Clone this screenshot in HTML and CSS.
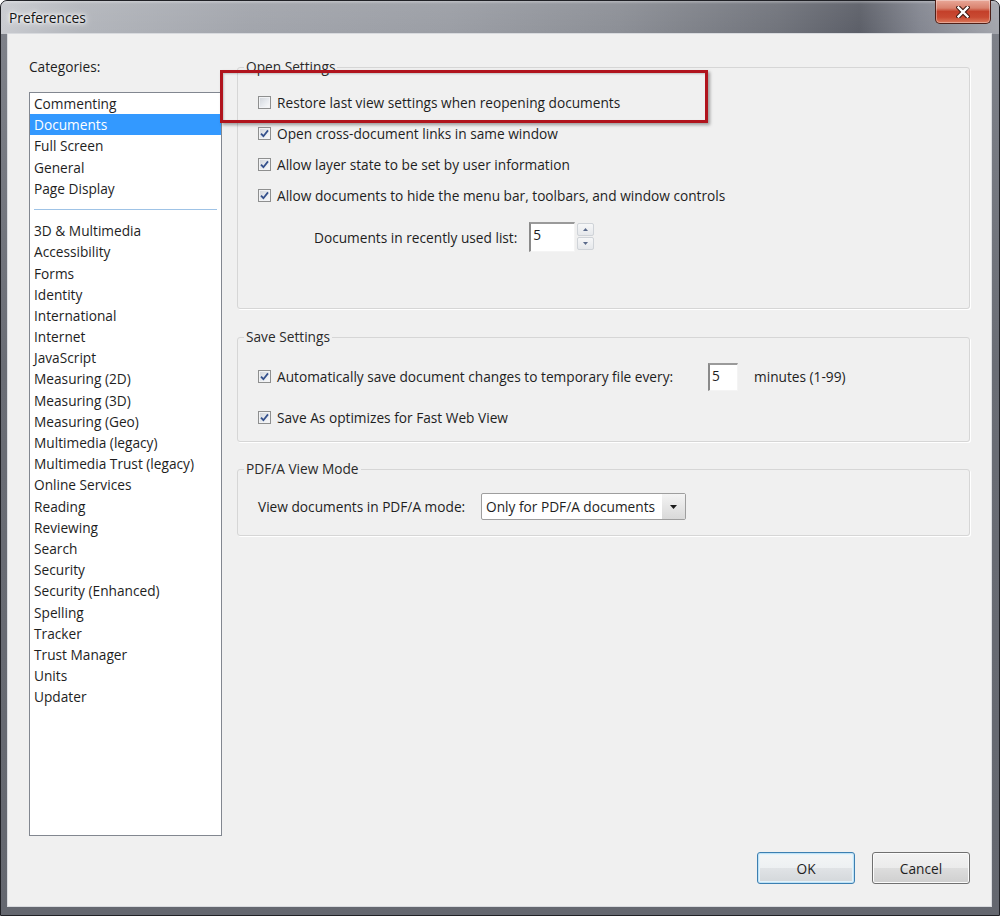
FILE: index.html
```html
<!DOCTYPE html>
<html lang="en">
<head>
<meta charset="utf-8">
<title>Preferences</title>
<link rel="stylesheet" href="styles.css">
</head>
<body>
<div class="window">
  <div class="titlebar">
    <span class="title">Preferences</span>
    <button class="close" aria-label="Close">
      <svg width="14" height="12" viewBox="0 0 14 12"><path d="M2.5 1.5 L11.5 10.5 M11.5 1.5 L2.5 10.5" stroke="#3b1710" stroke-width="4.4" stroke-linecap="square" fill="none"/><path d="M2.5 1.5 L11.5 10.5 M11.5 1.5 L2.5 10.5" stroke="#ffffff" stroke-width="2.4" stroke-linecap="square" fill="none"/></svg>
    </button>
  </div>
  <div class="client">
    <div class="main">
      <div class="categories">
        <div class="cat-label">Categories:</div>
        <ul class="list">
          <li>Commenting</li>
          <li class="selected">Documents</li>
          <li>Full Screen</li>
          <li>General</li>
          <li>Page Display</li>
          <li class="sep"></li>
          <li>3D &amp; Multimedia</li>
          <li>Accessibility</li>
          <li>Forms</li>
          <li>Identity</li>
          <li>International</li>
          <li>Internet</li>
          <li>JavaScript</li>
          <li>Measuring (2D)</li>
          <li>Measuring (3D)</li>
          <li>Measuring (Geo)</li>
          <li>Multimedia (legacy)</li>
          <li>Multimedia Trust (legacy)</li>
          <li>Online Services</li>
          <li>Reading</li>
          <li>Reviewing</li>
          <li>Search</li>
          <li>Security</li>
          <li>Security (Enhanced)</li>
          <li>Spelling</li>
          <li>Tracker</li>
          <li>Trust Manager</li>
          <li>Units</li>
          <li>Updater</li>
        </ul>
      </div>
      <div class="settings">
        <fieldset class="group group-open">
          <legend>Open Settings</legend>
          <div class="row"><span class="cb"></span><span>Restore last view settings when reopening documents</span></div>
          <div class="row"><span class="cb checked"><svg width="11" height="11" viewBox="0 0 11 11"><path d="M2 5.6 L4.4 8.2 L9 2.4" stroke="#34508c" stroke-width="1.8" fill="none"/></svg></span><span>Open cross-document links in same window</span></div>
          <div class="row"><span class="cb checked"><svg width="11" height="11" viewBox="0 0 11 11"><path d="M2 5.6 L4.4 8.2 L9 2.4" stroke="#34508c" stroke-width="1.8" fill="none"/></svg></span><span>Allow layer state to be set by user information</span></div>
          <div class="row"><span class="cb checked"><svg width="11" height="11" viewBox="0 0 11 11"><path d="M2 5.6 L4.4 8.2 L9 2.4" stroke="#34508c" stroke-width="1.8" fill="none"/></svg></span><span>Allow documents to hide the menu bar, toolbars, and window controls</span></div>
          <div class="spin-row">
            <span>Documents in recently used list:</span>
            <span class="num num-recent">5</span>
            <span class="spin">
              <span class="spin-btn"><svg width="5" height="3" viewBox="0 0 5 3"><path d="M0 3 L2.5 0 L5 3z" fill="#5a6a8a"/></svg></span>
              <span class="spin-btn"><svg width="5" height="3" viewBox="0 0 5 3"><path d="M0 0 L5 0 L2.5 3z" fill="#5a6a8a"/></svg></span>
            </span>
          </div>
        </fieldset>
        <fieldset class="group group-save">
          <legend>Save Settings</legend>
          <div class="row">
            <span class="autosave"><span class="cb checked"><svg width="11" height="11" viewBox="0 0 11 11"><path d="M2 5.6 L4.4 8.2 L9 2.4" stroke="#34508c" stroke-width="1.8" fill="none"/></svg></span><span>Automatically save document changes to temporary file every:</span></span>
            <span class="num num-min">5</span>
            <span class="unit">minutes (1-99)</span>
          </div>
          <div class="row row-gap"><span class="cb checked"><svg width="11" height="11" viewBox="0 0 11 11"><path d="M2 5.6 L4.4 8.2 L9 2.4" stroke="#34508c" stroke-width="1.8" fill="none"/></svg></span><span>Save As optimizes for Fast Web View</span></div>
        </fieldset>
        <fieldset class="group group-pdfa">
          <legend>PDF/A View Mode</legend>
          <div class="row">
            <span class="pdfa-label">View documents in PDF/A mode:</span>
            <span class="select"><span class="select-text">Only for PDF/A documents</span><span class="select-arrow"><svg width="7" height="4" viewBox="0 0 7 4"><path d="M0 0 H7 L3.5 4z" fill="#1a1a1a"/></svg></span></span>
          </div>
        </fieldset>
      </div>
    </div>
    <div class="buttons">
      <button class="btn btn-ok">OK</button>
      <button class="btn">Cancel</button>
    </div>
    <div class="annotation"></div>
  </div>
</div>
</body>
</html>
```

FILE: styles.css
```css
* { box-sizing: border-box; }
html, body { margin: 0; padding: 0; }
body {
  background: #ffffff;
  font-family: "Open Sans", "Segoe UI", sans-serif;
  font-size: 13.7px;
  color: #1e1e1e;
}

.window {
  width: 1000px;
  height: 916px;
  display: flex;
  flex-direction: column;
  border: 1px solid #202126;
  border-radius: 7px 7px 0 0;
  background: linear-gradient(180deg, #80838b 0%, #6a6d75 40%, #64676f 100%);
}

.titlebar {
  height: 33px;
  flex: 0 0 33px;
  display: flex;
  align-items: flex-start;
  padding-left: 8px;
  border-radius: 6px 6px 0 0;
  background:
    linear-gradient(180deg, rgba(255,255,255,0.35) 0, rgba(255,255,255,0.05) 3px, rgba(255,255,255,0) 100%),
    linear-gradient(90deg, #c9cbd0 0%, #b3b6bc 8%, #a2a5ac 25%, #9b9ea5 45%, #8c8f96 62%, #70737b 78%, #5c5f68 86%, #838690 92%, #a4a6ad 100%);
}

.title {
  margin-top: 7px;
  font-size: 13.8px;
  color: #151515;
  text-shadow: 0 0 8px #ffffff, 0 0 5px #ffffff, 0 0 3px #ffffff;
}

.close {
  margin-left: auto;
  margin-right: 8px;
  margin-top: -1px;
  width: 56px;
  height: 24px;
  padding: 0;
  display: flex;
  align-items: center;
  justify-content: center;
  border: 1px solid #4e2018;
  border-top: none;
  border-radius: 0 0 5px 5px;
  background: linear-gradient(180deg, #e9a899 0%, #d9826e 35%, #c4402a 50%, #c94a32 75%, #dc7a5c 100%);
  box-shadow: inset 0 0 0 1px rgba(255,255,255,0.35);
}

.client {
  position: relative;
  flex: 1;
  margin: 0 8px 9px 7px;
  background: #f0f0f0;
  box-shadow: 0 0 0 1px #d8dade;
  display: flex;
  flex-direction: column;
  padding: 23px 21px 22px 21px;
}

.main {
  flex: 1;
  display: grid;
  grid-template-columns: 193px 1fr;
  column-gap: 15px;
  min-height: 0;
}

.categories {
  display: flex;
  flex-direction: column;
}

.cat-label {
  line-height: 20px;
  height: 20px;
  color: #1e1e1e;
}

.list {
  flex: 1;
  margin: 15px 0 0 0;
  padding: 0;
  list-style: none;
  background: #ffffff;
  border: 1px solid #828790;
}

.list li {
  height: 21.2px;
  line-height: 21.2px;
  padding-left: 4px;
  white-space: nowrap;
  color: #1e1e1e;
}

.list li.selected {
  background: #3399ff;
  color: #ffffff;
}

.list li.sep {
  display: flex;
  align-items: center;
  padding: 0 4px;
}

.list li.sep::after {
  content: "";
  flex: 1;
  height: 1px;
  background: #9fc3e6;
}

.settings {
  display: flex;
  flex-direction: column;
}

.group {
  margin: 0;
  padding: 0 20px;
  border: 1px solid #d6d6d6;
  border-radius: 3px;
  box-shadow: 1px 1px 0 #ffffff;
  min-inline-size: 0;
}

.group legend {
  margin-left: -14px;
  padding: 0 2px;
  line-height: 20px;
  color: #2a2a2a;
}

.group-open { padding-top: 10px; padding-bottom: 56px; }
.group-save { margin-top: 18px; padding-top: 14px; padding-bottom: 8px; }
.group-pdfa { margin-top: 17px; padding-top: 12px; padding-bottom: 13px; }

.row {
  height: 31px;
  display: flex;
  align-items: center;
  gap: 6px;
  white-space: nowrap;
}

.row-gap { margin-top: 10px; }

.cb {
  width: 13px;
  height: 13px;
  flex: 0 0 13px;
  display: flex;
  align-items: center;
  justify-content: center;
  border: 1px solid #8e8f8f;
  background: linear-gradient(135deg, #cfd3d9 0%, #e8ebef 55%, #fbfbfb 100%);
  box-shadow: inset 0 0 0 1px #f2f3f5;
}

.spin-row {
  margin-top: 11px;
  height: 30px;
  display: flex;
  align-items: center;
  padding-left: 56px;
  white-space: nowrap;
}

.num {
  display: block;
  height: 30px;
  background: #ffffff;
  border-style: solid;
  border-width: 2px 1px 1px 2px;
  border-color: #9a9a9a #f4f4f4 #f4f4f4 #8a8a8a;
  padding: 2px 0 0 2px;
  line-height: 18px;
  color: #1e1e1e;
}

.num-recent { width: 46px; margin-left: 12px; }
.num-min { width: 30px; height: 28px; }

.spin {
  margin-left: 2px;
  display: flex;
  flex-direction: column;
  gap: 1px;
  height: 30px;
  padding-top: 1px;
}

.spin-btn {
  width: 17px;
  height: 13px;
  display: flex;
  align-items: center;
  justify-content: center;
  border: 1px solid #cfd3d8;
  border-radius: 2px;
  background: linear-gradient(180deg, #f6f7f8 0%, #e6e8eb 100%);
}

.autosave {
  display: flex;
  align-items: center;
  gap: 6px;
  width: 444px;
  flex: 0 0 444px;
}

.unit { margin-left: 10px; }

.pdfa-label {
  width: 223px;
  flex: 0 0 223px;
  margin-right: -6px;
}

.select {
  width: 205px;
  height: 27px;
  display: flex;
  align-items: stretch;
  border: 1px solid #9e9e9e;
  border-radius: 2px;
  background: #ffffff;
}

.select-text {
  flex: 1;
  padding-left: 4px;
  line-height: 25px;
}

.select-arrow {
  width: 23px;
  display: flex;
  align-items: center;
  justify-content: center;
  background: linear-gradient(180deg, #f4f4f4 0%, #e6e6e6 50%, #d9d9d9 100%);
}

.buttons {
  margin-top: 16px;
  display: flex;
  justify-content: flex-end;
  gap: 17px;
}

.btn {
  width: 98px;
  height: 32px;
  padding: 0;
  font-family: inherit;
  font-size: 13.7px;
  color: #1e1e1e;
  border: 1px solid #707070;
  border-radius: 3px;
  background: linear-gradient(180deg, #f2f2f2 0%, #ebebeb 50%, #dddddd 51%, #cfcfcf 100%);
  box-shadow: inset 0 0 0 1px #fbfbfb;
}

.btn-ok {
  border-color: #3c7fb1;
  box-shadow: inset 0 0 0 1px #bfe2f6, inset 0 0 0 2px #e4f3fb;
  background: linear-gradient(180deg, #f4f6f7 0%, #edf0f2 50%, #e0e3e6 51%, #d3d7da 100%);
}

.annotation {
  position: absolute;
  left: 212px;
  top: 36px;
  width: 488px;
  height: 53px;
  border: 3px solid #b0141d;
  box-shadow: 2px 2px 3px rgba(0, 0, 0, 0.35), inset 1px 1px 2px rgba(0, 0, 0, 0.2);
  pointer-events: none;
}
```
